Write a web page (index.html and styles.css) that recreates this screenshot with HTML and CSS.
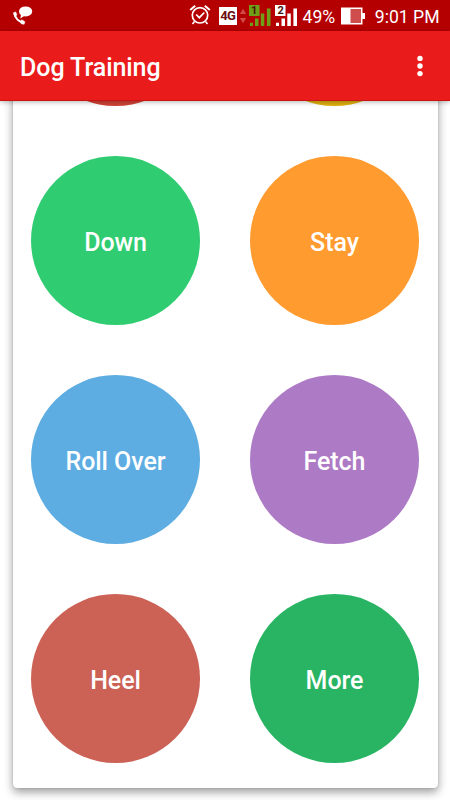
FILE: index.html
```html
<!DOCTYPE html>
<html lang="en">
<head>
<meta charset="utf-8">
<title>Dog Training</title>
<link rel="stylesheet" href="styles.css">
</head>
<body>
<div class="screen">
  <div class="status">
    <svg class="call" width="22" height="22" viewBox="0 0 22 22">
      <ellipse cx="13.6" cy="6.4" rx="6.6" ry="5" fill="#fff"/>
      <path d="M9 9.500L8.300 13.500L13 10.500z" fill="#fff"/>
      <path d="M2.300 8.200Q3.600 16 12 18.200" fill="none" stroke="#fff" stroke-width="2"/>
      <path d="M1.400 7.800l2.300-.9 1.300 3-2.200 1.700zM8.300 16.300l1.600-1.500 3 2-.8 2.500-3-.6z" fill="#fff" stroke="#fff" stroke-width=".5" stroke-linejoin="round"/>
    </svg>
    <svg class="alarm" width="22" height="22" viewBox="0 0 22 22" fill="none" stroke="#fff">
      <circle cx="11" cy="11.300" r="7.700" stroke-width="1.700"/>
      <path d="M1.200 6l5-4.200M20.800 6l-5-4.200" stroke-width="2"/>
      <path d="M5.500 17.500L3.500 20M16.500 17.500l2 2.500" stroke-width="1.600"/>
      <path d="M7.200 10.500l3.100 3.200 5-5.200" stroke-width="1.700"/>
    </svg>
    <span class="lte">4G</span>
    <svg class="updown" width="8" height="16" viewBox="0 0 8 16" fill="#cf4a48"><path d="M.8 6L4 .8 7.200 6zM.8 10L4 15.200 7.200 10z"/></svg>
    <div class="signal signal-green">
      <svg width="22" height="22" viewBox="0 0 22 22"><path d="M0 0h10.500v11H0zM1 17.700h3V21H1zM6 13.500h3.500V21H6zM11.800 8.500h3.500V21h-3.500zM17.900 3.500h3.600V21h-3.600z" fill="currentColor"/></svg>
      <span class="sim">1</span>
    </div>
    <div class="signal signal-white">
      <svg width="22" height="22" viewBox="0 0 22 22"><path d="M0 0h10.500v11H0zM1 17.700h3V21H1zM6.500 13.500H10V21H6.500zM12.300 8.500h3.500V21h-3.500zM18.400 3.500H22V21h-3.600z" fill="currentColor"/></svg>
      <span class="sim">2</span>
    </div>
    <span class="percent">49%</span>
    <svg class="battery" width="24" height="18" viewBox="0 0 24 18">
      <path d="M0 .5h21.500V6H24v6h-2.500v5.500H0z" fill="#fff"/>
      <path d="M9.500 2H20v14H9.500z" fill="#cf4e4d"/>
    </svg>
    <span class="time">9:01 PM</span>
  </div>
  <header class="appbar">
    <h1 class="title">Dog Training</h1>
    <svg class="more" width="6" height="22" viewBox="0 0 6 22" fill="#fff"><circle cx="3" cy="3.400" r="2.700"/><circle cx="3" cy="11" r="2.700"/><circle cx="3" cy="18.600" r="2.700"/></svg>
  </header>
  <main class="content">
    <div class="card">
      <div class="circle red"></div>
      <div class="circle yellow"></div>
      <div class="circle green"><span>Down</span></div>
      <div class="circle orange"><span>Stay</span></div>
      <div class="circle blue"><span>Roll Over</span></div>
      <div class="circle purple"><span>Fetch</span></div>
      <div class="circle coral"><span>Heel</span></div>
      <div class="circle forest"><span>More</span></div>
    </div>
  </main>
</div>
</body>
</html>
```
FILE: styles.css
```css
* { box-sizing: border-box; }
body { margin: 0; font-family: Roboto, "Liberation Sans", sans-serif; color: #fff; }
.screen { width: 450px; height: 800px; display: flex; flex-direction: column; overflow: hidden; background: #fff; }
.screen svg { display: block; flex: none; }

.status { height: 31px; flex: none; display: flex; align-items: center; padding: 1px 10.5px 0 12px; background: #b50002; }
.call { margin-top: -1px; }
.alarm { margin-left: auto; margin-right: 8px; margin-top: -2px; }
.lte { width: 17.5px; height: 18px; line-height: 18px; background: #fff; color: #6b0d0f; font-size: 13px; font-weight: 700; text-align: center; letter-spacing: -.5px; }
.updown { margin: 0 2px; }
.signal { position: relative; margin-right: 4.500px; }
.signal-green { color: #6f9f16; }
.signal-white { color: #fff; }
.sim { position: absolute; left: 0; top: 0; width: 11px; line-height: 11px; font-size: 11px; font-weight: 700; text-align: center; color: #4b1208; }
.percent { margin: 1px 0 0 1px; font-size: 17.600px; line-height: 22px; }
.battery { margin: 0 10px 0 5.500px; }
.time { margin-top: 1px; font-size: 17.600px; line-height: 22px; }

.appbar { position: relative; z-index: 1; height: 70px; flex: none; display: flex; align-items: center; justify-content: space-between; padding: 1px 27px 0 20px; background: #e91b1b; border-bottom: 1px solid #c91414; box-shadow: 0 1px 5px rgba(0, 0, 0, .3); }
.title { margin: 4px 0 0; font-size: 25px; letter-spacing: -.06px; line-height: 30px; font-weight: 500; }

.content { flex: 1; min-height: 0; display: flex; flex-direction: column; justify-content: flex-end; padding: 0 12.5px 12.5px; overflow: hidden; }
.card { flex: none; display: grid; grid-template-columns: 169px 169px; gap: 50px; padding: 24px 18.5px 24.500px; border-radius: 4px; background: #fff; box-shadow: 0 0 1px rgba(0, 0, 0, .35), 0 4px 10px rgba(0, 0, 0, .4); }
.circle { width: 169px; height: 169px; border-radius: 50%; display: flex; align-items: center; justify-content: center; padding-top: 5px; font-size: 25px; letter-spacing: -.06px; line-height: 30px; font-weight: 500; }
.red { background: #d14336; }
.yellow { background: #dfb010; }
.green { background: #2fcc71; }
.orange { background: #ff9b2f; }
.blue { background: #5dace2; }
.purple { background: #ad7ac5; }
.coral { background: #cc6155; }
.forest { background: #29b463; }
```
